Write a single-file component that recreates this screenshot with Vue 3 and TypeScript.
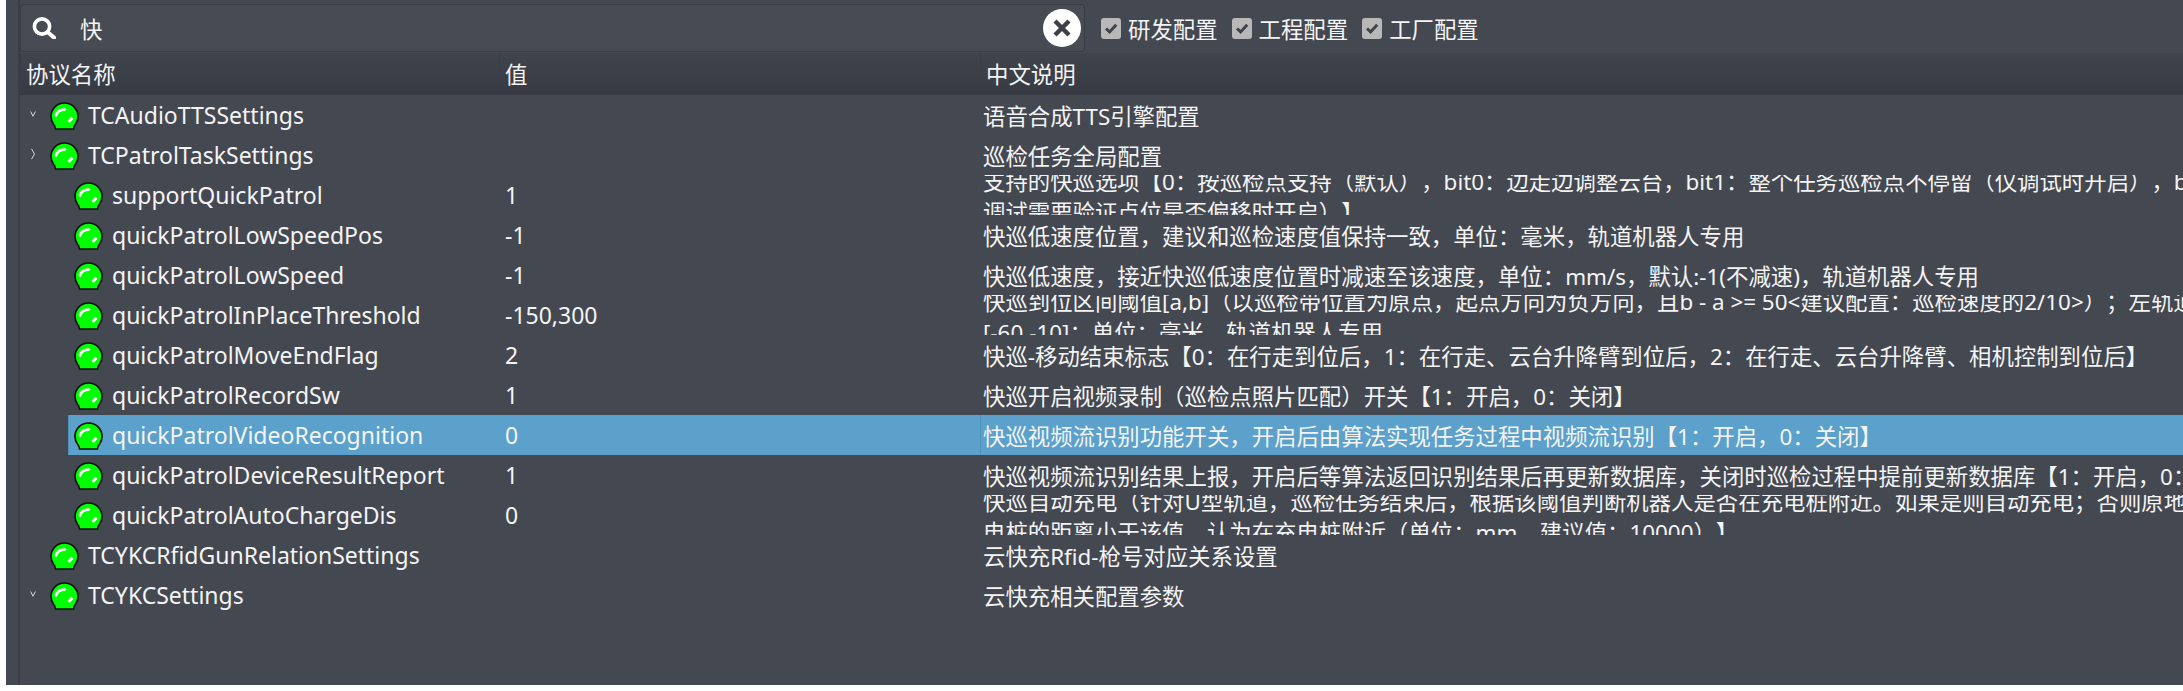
<script setup lang="ts">
interface Row {
  name: string
  depth: number
  value?: string
  lines: string[]
  arrow?: 'down' | 'right'
  selected?: boolean
}

const options = ['研发配置', '工程配置', '工厂配置']

const rows: Row[] = [
  { name: 'TCAudioTTSSettings', depth: 0, arrow: 'down', lines: ['语音合成TTS引擎配置'] },
  { name: 'TCPatrolTaskSettings', depth: 0, arrow: 'right', lines: ['巡检任务全局配置'] },
  {
    name: 'supportQuickPatrol', depth: 1, value: '1',
    lines: [
      '支持的快巡选项【0：按巡检点支持（默认），bit0：边走边调整云台，bit1：整个任务巡检点不停留（仅调试时开启），bit2：',
      '调试需要验证点位是否偏移时开启）】',
    ],
  },
  { name: 'quickPatrolLowSpeedPos', depth: 1, value: '-1', lines: ['快巡低速度位置，建议和巡检速度值保持一致，单位：毫米，轨道机器人专用'] },
  { name: 'quickPatrolLowSpeed', depth: 1, value: '-1', lines: ['快巡低速度，接近快巡低速度位置时减速至该速度，单位：mm/s，默认:-1(不减速)，轨道机器人专用'] },
  {
    name: 'quickPatrolInPlaceThreshold', depth: 1, value: '-150,300',
    lines: [
      '快巡到位区间阈值[a,b]（以巡检带位置为原点，起点方向为负方向，且b - a >= 50<建议配置：巡检速度的2/10>）；左轨道',
      '[-60,-10]；单位：毫米，轨道机器人专用',
    ],
  },
  { name: 'quickPatrolMoveEndFlag', depth: 1, value: '2', lines: ['快巡-移动结束标志【0：在行走到位后，1：在行走、云台升降臂到位后，2：在行走、云台升降臂、相机控制到位后】'] },
  { name: 'quickPatrolRecordSw', depth: 1, value: '1', lines: ['快巡开启视频录制（巡检点照片匹配）开关【1：开启，0：关闭】'] },
  { name: 'quickPatrolVideoRecognition', depth: 1, value: '0', selected: true, lines: ['快巡视频流识别功能开关，开启后由算法实现任务过程中视频流识别【1：开启，0：关闭】'] },
  { name: 'quickPatrolDeviceResultReport', depth: 1, value: '1', lines: ['快巡视频流识别结果上报，开启后等算法返回识别结果后再更新数据库，关闭时巡检过程中提前更新数据库【1：开启，0：关闭】'] },
  {
    name: 'quickPatrolAutoChargeDis', depth: 1, value: '0',
    lines: [
      '快巡自动充电（针对U型轨道，巡检任务结束后，根据该阈值判断机器人是否在充电桩附近。如果是则自动充电；否则原地等待',
      '电桩的距离小于该值，认为在充电桩附近（单位：mm，建议值：10000）】',
    ],
  },
  { name: 'TCYKCRfidGunRelationSettings', depth: 0, lines: ['云快充Rfid-枪号对应关系设置'] },
  { name: 'TCYKCSettings', depth: 0, arrow: 'down', lines: ['云快充相关配置参数'] },
]
</script>

<template>
  <div class="window">
    <div class="gutter"></div>
    <div class="content">
      <div class="toolbar">
        <div class="search">
          <svg class="search-icon" viewBox="0 0 24 22" width="24" height="22">
            <circle cx="10" cy="9.5" r="7.6" fill="none" stroke="#fff" stroke-width="3.6" />
            <path d="M15.5 15l6.5 5.6" stroke="#fff" stroke-width="4" stroke-linecap="round" />
          </svg>
          <span class="search-text">快</span>
          <span class="clear">
            <svg viewBox="0 0 38 38" width="38" height="38">
              <circle cx="19" cy="19" r="19" fill="#fff" />
              <path d="M12 12l14 14M26 12L12 26" stroke="#3d4047" stroke-width="4.4" />
            </svg>
          </span>
        </div>
        <label v-for="o in options" :key="o" class="option">
          <span class="check">
            <svg viewBox="0 0 20 20" width="20" height="20">
              <path d="M5 10.5l3.6 3.4L15.2 6.8" fill="none" stroke="#3f434a" stroke-width="3" />
            </svg>
          </span>
          <span>{{ o }}</span>
        </label>
      </div>

      <div class="head grid">
        <div class="hcell">协议名称</div>
        <div class="hcell">值</div>
        <div class="hcell">中文说明</div>
      </div>

      <div v-for="r in rows" :key="r.name" class="row grid">
        <div class="name" :style="{ paddingLeft: 24 + r.depth * 24 + 'px' }">
          <div class="name-inner" :class="{ sel: r.selected }">
            <span class="arrow">
              <svg v-if="r.arrow === 'down'" viewBox="0 0 6 6" width="6" height="6">
                <path d="M0.7 0.5L3 5.3L5.3 0.5" fill="none" stroke="#d8d8d8" stroke-width="1" />
              </svg>
              <svg v-else-if="r.arrow === 'right'" viewBox="0 0 6 12" width="6" height="12">
                <path d="M1.5 0.8L4.5 6L1.5 11.2" fill="none" stroke="#d8d8d8" stroke-width="1" />
              </svg>
            </span>
            <svg class="bulb" viewBox="0 0 29 28" width="29" height="28">
              <path d="M5.5 27 C5.5 25 5 24 3.6 22.3 C1.8 20 1 17.4 1 14.5 C1 7 7 1 14.5 1 C22 1 28 7 28 14.5 C28 17.4 27.2 20 25.4 22.3 C24 24 23.5 25 23.5 27 Z" fill="#00ff00" stroke="#111" stroke-width="1.7" stroke-linejoin="round" />
              <path d="M6 13.5 C6.8 10.2 10 7.6 14.6 7.6" fill="none" stroke="#fff" stroke-width="2.8" stroke-linecap="round" />
              <path d="M22.4 15.8 L18.6 20" fill="none" stroke="#fff" stroke-width="3" />
            </svg>
            <span class="label">{{ r.name }}</span>
          </div>
        </div>
        <div class="value" :class="{ sel: r.selected }">{{ r.value }}</div>
        <div class="desc" :class="{ sel: r.selected, multi: r.lines.length > 1 }">
          <div v-for="l in r.lines" :key="l" class="line">{{ l }}</div>
        </div>
      </div>
    </div>
  </div>
</template>

<style scoped>
.window {
  display: flex;
  width: 2183px;
  height: 685px;
  padding-left: 6px;
  box-sizing: border-box;
  overflow: hidden;
  color: #f4f4f4;
  font-family: "Noto Sans", "Noto Sans CJK SC", sans-serif;
  font-size: 22.4px;
  text-spacing-trim: space-all;
}
.gutter {
  width: 14px;
  flex: none;
  background: #444851;
  border-right: 2px solid #3b3e46;
  box-sizing: border-box;
}
.content {
  flex: 1;
  min-width: 0;
  background: #444851;
  overflow: hidden;
}
.toolbar {
  display: flex;
  align-items: center;
  height: 53px;
  padding-top: 3px;
  box-sizing: border-box;
}
.search {
  width: 1065px;
  height: 48px;
  box-sizing: border-box;
  display: flex;
  align-items: center;
  background: #474b54;
  border: 1px solid #3a3d45;
  border-radius: 3px;
  padding-left: 11px;
  flex: none;
  margin-right: 16px;
}
.search-icon {
  flex: none;
}
.search-text {
  margin-left: 24px;
  flex: 1;
}
.clear {
  display: flex;
  margin-right: 3px;
}
.option {
  display: flex;
  align-items: center;
  gap: 7px;
  margin-right: 14px;
}
.check {
  width: 20px;
  height: 21px;
  display: flex;
  align-items: center;
  justify-content: center;
  background: #b8b8b8;
  border-radius: 3px;
}
.grid {
  display: grid;
  grid-template-columns: 479px 481px 1fr;
}
.head {
  height: 42px;
  background: linear-gradient(#40444d, #373a43);
}
.hcell {
  line-height: 44px;
  height: 42px;
  padding-left: 5px;
  border-left: 1px solid #3a3d45;
  white-space: nowrap;
}
.row {
  height: 40px;
}
.name {
  min-width: 0;
}
.name-inner {
  height: 40px;
  display: flex;
  align-items: center;
  position: relative;
  padding-left: 6px;
}
.name-inner.sel {
  background: #5ba1cb;
  box-shadow: inset 1px 0 0 #4f8fb8;
}
.arrow {
  position: absolute;
  left: -17px;
  top: 11px;
  width: 12px;
  height: 16px;
  display: flex;
  align-items: center;
  justify-content: center;
}
.bulb {
  flex: none;
  margin-top: 1px;
}
.label {
  margin-left: 9px;
  white-space: nowrap;
  font-size: 23px;
}
.value {
  line-height: 40px;
  padding-left: 6px;
  white-space: nowrap;
  font-size: 23px;
}
.value.sel,
.desc.sel {
  background: #5ba1cb;
}
.desc {
  height: 40px;
  overflow: hidden;
  padding-left: 3px;
  padding-top: 2px;
  display: flex;
  flex-direction: column;
  justify-content: center;
  white-space: nowrap;
  min-width: 0;
  box-sizing: border-box;
}
.desc.multi {
  padding-top: 4px;
}
.desc.sel {
  border-left: 1px solid #4f8fb8;
  padding-left: 2px;
}
.line {
  flex: none;
  line-height: 31px;
}
</style>

<style>
html,
body {
  margin: 0;
  background: #fff;
}
</style>
